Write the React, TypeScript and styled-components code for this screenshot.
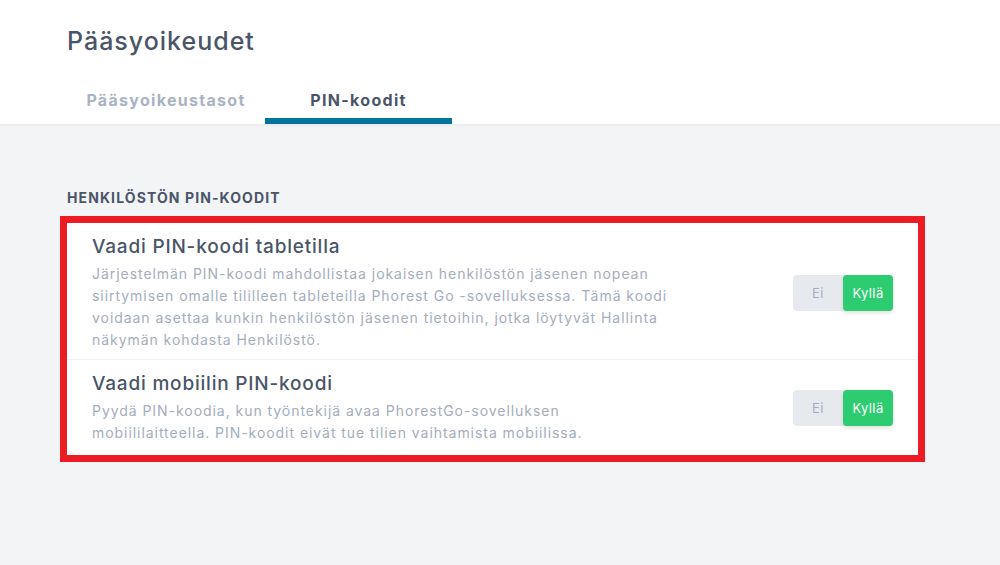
import React from 'react';
import styled, { createGlobalStyle } from 'styled-components';

const GlobalStyle = createGlobalStyle`
  html, body {
    margin: 0;
    padding: 0;
    background: #f3f4f6;
  }
  body {
    font-family: Inter, 'Open Sans', sans-serif;
    -webkit-font-smoothing: antialiased;
  }
`;

const Page = styled.div`
  width: 1000px;
  height: 565px;
  background: #f3f4f6;
  overflow: hidden;
`;

const Header = styled.header`
  background: #ffffff;
  padding: 0 0 0 67px;
  box-shadow: 0 1px 4px rgba(0, 0, 0, 0.06);
`;

const PageTitle = styled.h1`
  margin: 0;
  padding-top: 26px;
  height: 32px;
  font-size: 25px;
  line-height: 30px;
  font-weight: 500;
  color: #4a5568;
  letter-spacing: 1px;
`;

const Tabs = styled.nav`
  display: flex;
  margin-top: 24px;
`;

const Tab = styled.div<{ $active?: boolean; $width: number }>`
  width: ${p => p.$width}px;
  height: 42px;
  display: flex;
  align-items: center;
  justify-content: center;
  box-sizing: border-box;
  font-size: 16px;
  font-weight: 700;
  letter-spacing: 1.3px;
  color: ${p => (p.$active ? '#4a5568' : '#a9b3c2')};
  border-bottom: 6px solid ${p => (p.$active ? '#00739f' : 'transparent')};
`;

const Content = styled.main`
  padding: 65px 75px 0 60px;
`;

const SectionLabel = styled.h2`
  margin: 0 0 9px 7px;
  font-size: 14px;
  line-height: 18px;
  font-weight: 700;
  color: #4a5568;
  text-transform: uppercase;
  letter-spacing: 1.1px;
`;

const Card = styled.section`
  background: #ffffff;
  border: 7px solid #ed1c24;
  width: 865px;
  box-sizing: border-box;
`;

const Row = styled.div`
  display: flex;
  align-items: center;
  justify-content: space-between;
  padding: 11px 25px 8px 25px;
  & + & {
    border-top: 1px solid #eef1f5;
  }
  &:last-child {
    padding-bottom: 11px;
  }
`;

const RowText = styled.div`
  display: flex;
  flex-direction: column;
`;

const RowTitle = styled.h3`
  margin: 0 0 3px;
  font-size: 19px;
  line-height: 26px;
  font-weight: 500;
  color: #4a5568;
  letter-spacing: 0.8px;
`;

const RowDesc = styled.p`
  margin: 0;
  font-size: 14px;
  line-height: 22px;
  color: #a3adbd;
  letter-spacing: 0.95px;
`;

const Toggle = styled.div`
  display: flex;
  width: 100px;
  height: 36px;
  border-radius: 4px;
  background: #e6e9ee;
  flex-shrink: 0;
`;

const ToggleOption = styled.div<{ $on?: boolean }>`
  flex: 1;
  display: flex;
  align-items: center;
  justify-content: center;
  font-size: 13px;
  letter-spacing: 0.4px;
  border-radius: 4px;
  color: ${p => (p.$on ? '#ffffff' : '#a3adbd')};
  background: ${p => (p.$on ? '#2ecc71' : 'transparent')};
  box-shadow: ${p => (p.$on ? '0 2px 4px rgba(0,0,0,0.12)' : 'none')};
`;

const settings = [
  {
    title: 'Vaadi PIN-koodi tabletilla',
    lines: [
      'Järjestelmän PIN-koodi mahdollistaa jokaisen henkilöstön jäsenen nopean',
      'siirtymisen omalle tililleen tableteilla Phorest Go -sovelluksessa. Tämä koodi',
      'voidaan asettaa kunkin henkilöstön jäsenen tietoihin, jotka löytyvät Hallinta',
      'näkymän kohdasta Henkilöstö.',
    ],
  },
  {
    title: 'Vaadi mobiilin PIN-koodi',
    lines: [
      'Pyydä PIN-koodia, kun työntekijä avaa PhorestGo-sovelluksen',
      'mobiililaitteella. PIN-koodit eivät tue tilien vaihtamista mobiilissa.',
    ],
  },
];

export default function App() {
  return (
    <Page>
      <GlobalStyle />
      <Header>
        <PageTitle>Pääsyoikeudet</PageTitle>
        <Tabs>
          <Tab $width={198}>Pääsyoikeustasot</Tab>
          <Tab $width={187} $active>PIN-koodit</Tab>
        </Tabs>
      </Header>
      <Content>
        <SectionLabel>Henkilöstön PIN-koodit</SectionLabel>
        <Card>
          {settings.map(s => (
            <Row key={s.title}>
              <RowText>
                <RowTitle>{s.title}</RowTitle>
                <RowDesc>
                  {s.lines.map((l, i) => (
                    <React.Fragment key={i}>
                      {l}
                      {i < s.lines.length - 1 && <br />}
                    </React.Fragment>
                  ))}
                </RowDesc>
              </RowText>
              <Toggle>
                <ToggleOption>Ei</ToggleOption>
                <ToggleOption $on>Kyllä</ToggleOption>
              </Toggle>
            </Row>
          ))}
        </Card>
      </Content>
    </Page>
  );
}
